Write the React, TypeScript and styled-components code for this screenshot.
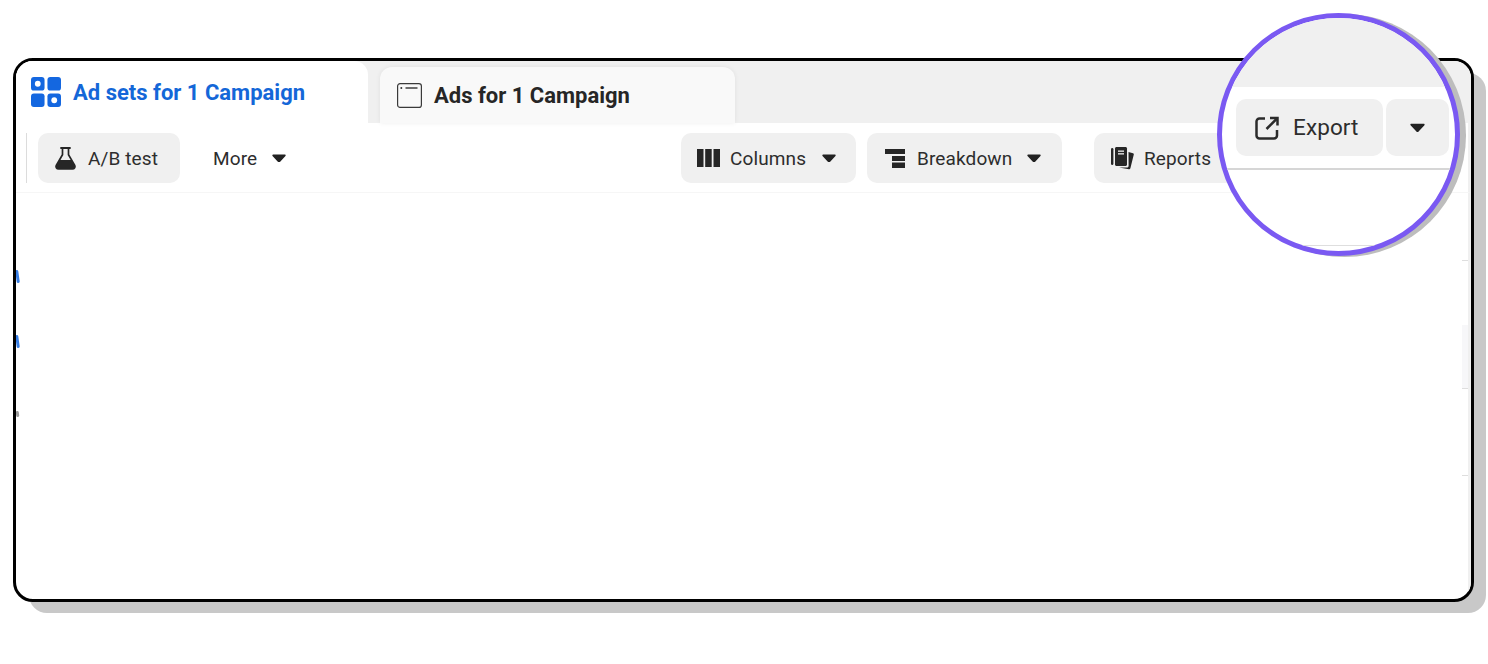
import React from 'react';
import styled, { createGlobalStyle } from 'styled-components';

const GlobalStyle = createGlobalStyle`
    html, body {
        margin: 0;
        background: #ffffff;
        font-family: Roboto, "Liberation Sans", sans-serif;
    }
`;

const Stage = styled.div`
    position: relative;
    width: 1488px;
    height: 664px;
    padding: 58px 0 0 13px;
    box-sizing: border-box;
    overflow: hidden;
`;

const Card = styled.div`
    width: 1461px;
    height: 544px;
    box-sizing: border-box;
    border: 3px solid #000000;
    border-radius: 20px;
    box-shadow: 14px 13px 0 -2px #c8c8c8;
    background: #ffffff;
    overflow: hidden;
    display: flex;
    flex-direction: column;
    position: relative;
`;

const TabBar = styled.div`
    height: 62px;
    flex: none;
    display: flex;
    align-items: flex-end;
    gap: 12px;
    background: #f0f0f0;
`;

const ActiveTab = styled.div`
    width: 352px;
    height: 62px;
    box-sizing: border-box;
    padding-left: 15px;
    display: flex;
    align-items: center;
    gap: 12px;
    background: #ffffff;
    border-top-right-radius: 14px;
    color: #1467d8;
    font-size: 22px;
    font-weight: 700;
`;

const IdleTab = styled.div`
    width: 355px;
    height: 56px;
    box-sizing: border-box;
    padding-left: 17px;
    display: flex;
    align-items: center;
    gap: 12px;
    background: #f9f9f9;
    border-radius: 12px 12px 0 0;
    box-shadow: 0 0 5px rgba(0, 0, 0, 0.07);
    color: #262626;
    font-size: 22px;
    font-weight: 700;
`;

const Toolbar = styled.div`
    height: 70px;
    flex: none;
    box-sizing: border-box;
    display: flex;
    align-items: flex-start;
    padding: 10px 0 0 10px;
    border-bottom: 1px solid #f6f6f6;
    border-right: 3px solid #f0f0f0;
`;

const Divider = styled.div`
    width: 1px;
    height: 50px;
    background: #dcdcdc;
    margin-right: 11px;
`;

const ToolButton = styled.div<{ $width: number; $gap?: number; $left?: number; $ml?: number }>`
    width: ${(p) => p.$width}px;
    height: 50px;
    box-sizing: border-box;
    flex: none;
    display: flex;
    align-items: center;
    gap: ${(p) => p.$gap ?? 10}px;
    padding-left: ${(p) => p.$left ?? 16}px;
    margin-left: ${(p) => p.$ml ?? 0}px;
    background: #f0f0f0;
    border-radius: 10px;
    color: #2d2d2d;
    font-size: 19px;
    letter-spacing: 0.12px;
    white-space: nowrap;
`;

const MoreButton = styled.div`
    height: 50px;
    margin-left: 33px;
    display: flex;
    align-items: center;
    gap: 15px;
    color: #2d2d2d;
    font-size: 19px;
    letter-spacing: 0.12px;
`;

const Spacer = styled.div`
    flex: 1;
`;

const RightGap = styled.div`
    flex: none;
    width: 224px;
`;

const Body = styled.div`
    flex: 1;
    position: relative;
    border-right: 3px solid #f0f0f0;
`;

const Tick = styled.span<{ $top: number }>`
    position: absolute;
    right: 0;
    top: ${(p) => p.$top}px;
    width: 6px;
    height: 1px;
    background: #dedede;
`;

const ScrollPatch = styled.span`
    position: absolute;
    right: 0;
    top: 132px;
    width: 6px;
    height: 63px;
    background: #f7f7f9;
`;

const Speck = styled.span<{ $top: number; $color: string; $height: number }>`
    position: absolute;
    left: 0;
    top: ${(p) => p.$top}px;
    width: 2.5px;
    height: ${(p) => p.$height}px;
    background: ${(p) => p.$color};
    border-radius: 2px;
    transform: rotate(-8deg);
    opacity: 0.85;
`;

const Lens = styled.div`
    position: absolute;
    left: 1217px;
    top: 13px;
    width: 243px;
    height: 243px;
    box-sizing: border-box;
    border: 5px solid #7a59f2;
    border-radius: 50%;
    background: #ffffff;
    box-shadow: 6px 1px 0 #bdbdbd;
    overflow: hidden;
    display: flex;
    flex-direction: column;
`;

const LensTop = styled.div`
    height: 69px;
    flex: none;
    background: #f0f0f0;
`;

const LensBar = styled.div`
    height: 83px;
    flex: none;
    box-sizing: border-box;
    display: flex;
    gap: 3px;
    padding: 12px 0 0 14px;
    border-bottom: 2px solid #d6d6d6;
`;

const LensButton = styled.div<{ $width: number }>`
    width: ${(p) => p.$width}px;
    height: 57px;
    box-sizing: border-box;
    flex: none;
    display: flex;
    align-items: center;
    justify-content: ${(p) => (p.$width < 100 ? 'center' : 'flex-start')};
    gap: 14px;
    padding-left: ${(p) => (p.$width < 100 ? 0 : 19)}px;
    background: #f0f0f0;
    border-radius: 10px;
    color: #2d2d2d;
    font-size: 22.5px;
    letter-spacing: 0.1px;
`;

const LensLabel = styled.span`
    margin-bottom: 2px;
`;

const LensRule = styled.div`
    height: 1px;
    margin: 75px 14px 0 60px;
    background: #dedede;
`;

const CaretSvg = styled.svg<{ $ml?: number }>`
    flex: none;
    margin-left: ${(p) => p.$ml ?? 0}px;
`;

const Caret: React.FC<{ size?: number; ml?: number }> = ({ size = 14, ml }) => (
    <CaretSvg $ml={ml} width={size} height={size * 0.64} viewBox="0 0 14 9">
        <path d="M1.2 0.6h11.6c.8 0 1.2.9.7 1.5L7.8 8.2c-.4.5-1.2.5-1.6 0L.5 2.1C0 1.5.4.6 1.2.6z" fill="#222" />
    </CaretSvg>
);

const GridIcon = () => (
    <svg width="30" height="30" viewBox="0 0 31 31" style={{ flex: 'none' }}>
        <rect x="0" y="0" width="14" height="14" rx="3" fill="#1467e0" />
        <rect x="17" y="0" width="14" height="14" rx="3" fill="#1467e0" />
        <rect x="0" y="17" width="14" height="14" rx="3" fill="#1467e0" />
        <rect x="17" y="17" width="14" height="14" rx="3" fill="#1467e0" />
        <circle cx="7" cy="7" r="3" fill="#fff" />
        <circle cx="24" cy="24" r="3" fill="#fff" />
    </svg>
);

const WindowIcon = () => (
    <svg width="25" height="25" viewBox="0 0 25 25" style={{ flex: 'none' }}>
        <rect x="0.6" y="0.6" width="23.8" height="23.8" rx="2.5" fill="none" stroke="#3a3a3a" strokeWidth="1.2" />
        <circle cx="4.3" cy="5" r="1" fill="#333" />
        <rect x="8.5" y="4.3" width="12" height="1.4" fill="#333" />
    </svg>
);

const FlaskIcon = () => (
    <svg width="21" height="23" viewBox="0 0 21 23" style={{ flex: 'none' }}>
        <path d="M6 1h9" stroke="#262626" strokeWidth="1.8" strokeLinecap="round" />
        <path
            d="M7.5 1.5v6.2L1.4 18.2C.4 20 1.6 22 3.6 22h13.8c2 0 3.2-2 2.2-3.8L13.5 7.7V1.5"
            fill="none"
            stroke="#262626"
            strokeWidth="1.7"
        />
        <path d="M4.8 13h11.4l3.4 5.2c1 1.8-.2 3.8-2.2 3.8H3.6c-2 0-3.2-2-2.2-3.8z" fill="#262626" />
    </svg>
);

const ColumnsIcon = () => (
    <svg width="23" height="18" viewBox="0 0 23 18" style={{ flex: 'none' }}>
        <rect x="0" y="0" width="6.5" height="18" fill="#262626" />
        <rect x="8.2" y="0" width="6.5" height="18" fill="#262626" />
        <rect x="16.5" y="0" width="6.5" height="18" fill="#262626" />
    </svg>
);

const BreakdownIcon = () => (
    <svg width="20" height="19" viewBox="0 0 20 19" style={{ flex: 'none' }}>
        <rect x="0" y="0" width="20" height="5" fill="#262626" />
        <rect x="7" y="7" width="13" height="5" fill="#262626" />
        <rect x="7" y="13.500" width="13" height="5.500" fill="#262626" />
    </svg>
);

const ReportsIcon = () => (
    <svg width="23" height="23" viewBox="0 0 23 23" style={{ flex: 'none' }}>
        <rect x="0" y="1" width="2.4" height="17" rx="1.2" fill="#262626" />
        <path d="M4 1.5C4 .7 4.7 0 5.5 0h9c.8 0 1.5.7 1.5 1.5v16c0 .8-.7 1.5-1.5 1.5h-9C4.700 19 4 18.300 4 17.500z" fill="#262626" />
        <rect x="7" y="3.500" width="6" height="1.300" fill="#f0f0f0" />
        <rect x="7" y="6.200" width="6" height="1.300" fill="#f0f0f0" />
        <path d="M17.500 5l4.500 1.200c.6.200 1 .8.800 1.400l-3.400 13.700c-.2.700-.8 1-1.400.9L8 20.500h8c1 0 1.600-.8 1.600-1.600z" fill="#262626" />
    </svg>
);

const ExportIcon = () => (
    <svg width="24" height="24" viewBox="0 0 24 24" style={{ flex: 'none' }} fill="none" stroke="#2b2b2b" strokeWidth="2.5">
        <path d="M10 2.500H4.500a3 3 0 0 0-3 3v14a3 3 0 0 0 3 3H19a3 3 0 0 0 3-3V14" />
        <path d="M15 2h7.500v7.500" />
        <path d="M22 2.500 11.500 13" />
    </svg>
);

const App: React.FC = () => {
    return (
        <Stage>
            <GlobalStyle />
            <Card>
                <TabBar>
                    <ActiveTab>
                        <GridIcon />
                        Ad sets for 1 Campaign
                    </ActiveTab>
                    <IdleTab>
                        <WindowIcon />
                        Ads for 1 Campaign
                    </IdleTab>
                </TabBar>
                <Toolbar>
                    <Divider />
                    <ToolButton $width={142} $gap={12} $left={17}>
                        <FlaskIcon />
                        A/B test
                    </ToolButton>
                    <MoreButton>
                        More
                        <Caret />
                    </MoreButton>
                    <Spacer />
                    <ToolButton $width={175}>
                        <ColumnsIcon />
                        Columns
                        <Caret ml={6} />
                    </ToolButton>
                    <ToolButton $width={195} $ml={11} $left={18} $gap={12}>
                        <BreakdownIcon />
                        Breakdown
                        <Caret ml={3} />
                    </ToolButton>
                    <ToolButton $width={150} $ml={32} $left={17}>
                        <ReportsIcon />
                        Reports
                    </ToolButton>
                    <RightGap />
                </Toolbar>
                <Body>
                    <Tick $top={67} />
                    <ScrollPatch />
                    <Tick $top={195} />
                    <Tick $top={282} />
                    <Speck $top={77} $height={13} $color="#1467e0" />
                    <Speck $top={142} $height={13} $color="#1467e0" />
                    <Speck $top={218} $height={6} $color="#8a8a8a" />
                </Body>
            </Card>
            <Lens>
                <LensTop />
                <LensBar>
                    <LensButton $width={147}>
                        <ExportIcon />
                        <LensLabel>Export</LensLabel>
                    </LensButton>
                    <LensButton $width={63}>
                        <Caret size={15} />
                    </LensButton>
                </LensBar>
                <LensRule />
            </Lens>
        </Stage>
    );
};

export default App;
